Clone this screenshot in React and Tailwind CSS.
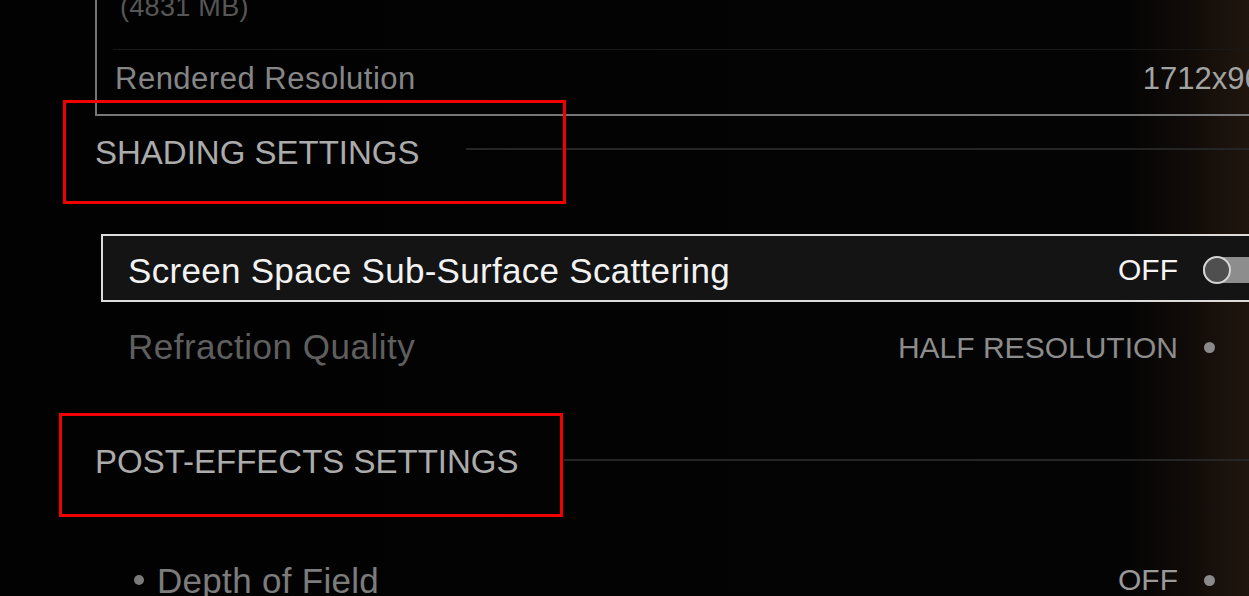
import React from "react";

function Heading({ title, className, lineClass }) {
  return (
    <div className={`flex items-start ${className}`}>
      <span className="whitespace-nowrap text-[33px] leading-[33px] text-[#ababab]">{title}</span>
      <div className={`h-[2px] flex-1 bg-[#252525] ${lineClass}`} />
    </div>
  );
}

function Dot() {
  return (
    <div className="ml-[25px] flex w-[64px] shrink-0 items-center">
      <div className="ml-[1px] h-[11px] w-[11px] rounded-full bg-[#8a8a8a]" />
    </div>
  );
}

function Toggle() {
  return (
    <div className="ml-[25px] flex h-[26px] w-[64px] shrink-0 items-center rounded-full bg-[#8d8d8d]">
      <div className="h-[28px] w-[28px] shrink-0 rounded-full border-2 border-[#d4d4d4] bg-[#4f4f4f]" />
    </div>
  );
}

export default function App() {
  return (
    <div className="relative h-[596px] w-[1249px] overflow-hidden bg-[linear-gradient(90deg,#020202_0%,#040404_90%,#100b08_95%,#20160f_100%)] font-['Liberation_Sans',Arial,sans-serif]">
      <div className="flex flex-col pl-[95px]">
        {/* top panel (cut off) */}
        <div className="flex h-[116px] w-[1220px] flex-col border-b-2 border-l-2 border-[#767676] pl-[18px] pr-[36px]">
          <div className="-mt-[6px] ml-[5px] text-[27px] leading-[27px] tracking-[0.3px] text-[#565656]">(4831 MB)</div>
          <div className="-ml-[2px] mt-[28px] h-px bg-[#181818]" />
          <div className="mt-[13px] flex justify-between text-[31px] leading-[31px]">
            <span className="tracking-[0.5px] text-[#868686]">Rendered Resolution</span>
            <span className="text-[#a3a3a3]">1712x960</span>
          </div>
        </div>

        <Heading title="SHADING SETTINGS" className="mt-[20px]" lineClass="ml-[46px] mt-[12px]" />

        {/* selected row */}
        <div className="ml-[6px] mt-[65px] flex h-[68px] w-[1189px] items-center justify-between border-2 border-[#dcdcdc] bg-[#141414] pl-[25px] pr-[21px] pt-[4px]">
          <span className="text-[35px] leading-[35px] tracking-[0.3px] text-[#f2f2f2]">Screen Space Sub-Surface Scattering</span>
          <div className="flex items-center">
            <span className="text-[30px] leading-[30px] text-[#f4f4f4]">OFF</span>
            <Toggle />
          </div>
        </div>

        <div className="ml-[6px] mt-[8px] flex h-[68px] w-[1189px] items-center justify-between border-2 border-transparent pl-[25px] pr-[21px] pt-[4px]">
          <span className="text-[35px] leading-[35px] tracking-[0.5px] text-[#5f5f5f]">Refraction Quality</span>
          <div className="flex items-center pt-[3px]">
            <span className="text-[30px] leading-[30px] text-[#8c8c8c]">HALF RESOLUTION</span>
            <Dot />
          </div>
        </div>

        <Heading title="POST-EFFECTS SETTINGS" className="mt-[67px]" lineClass="ml-[45px] mt-[14px]" />

        <div className="ml-[6px] mt-[66px] flex h-[68px] w-[1189px] shrink-0 items-center justify-between border-2 border-transparent pl-[25px] pr-[21px] pt-[4px]">
          <div className="flex items-center">
            <div className="ml-[6px] h-[10px] w-[10px] rounded-full bg-[#7a7a7a]" />
            <span className="ml-[13px] text-[35px] leading-[35px] tracking-[0.3px] text-[#7c7c7c]">Depth of Field</span>
          </div>
          <div className="flex items-center">
            <span className="text-[30px] leading-[30px] text-[#9a9a9a]">OFF</span>
            <Dot />
          </div>
        </div>
      </div>

      {/* red annotation boxes */}
      <div className="pointer-events-none absolute left-[63px] top-[100px] h-[104px] w-[503px] border-[3px] border-[#f00000]" />
      <div className="pointer-events-none absolute left-[59px] top-[413px] h-[104px] w-[504px] border-[3px] border-[#f00000]" />
    </div>
  );
}
